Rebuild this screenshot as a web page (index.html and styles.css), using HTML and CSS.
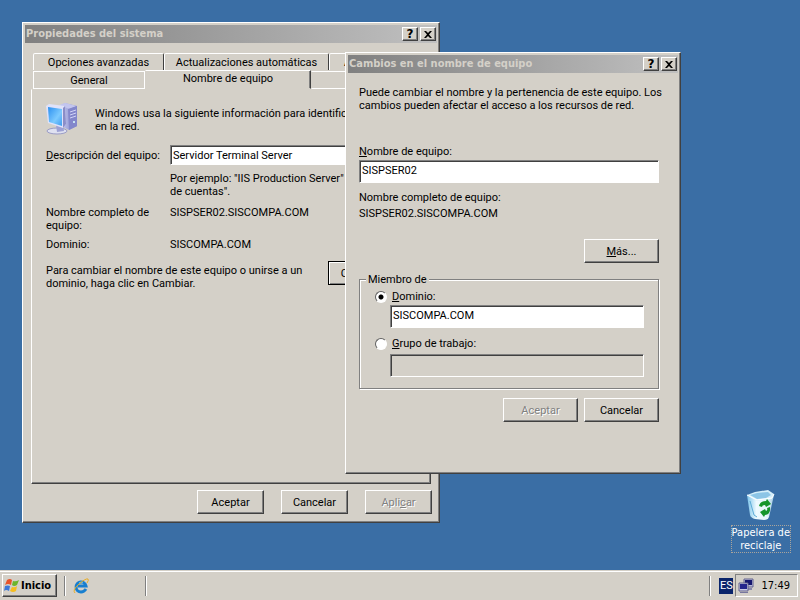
FILE: index.html
```html
<!DOCTYPE html>
<html lang="es">
<head>
<meta charset="utf-8">
<title>Escritorio</title>
<link rel="stylesheet" href="styles.css">
</head>
<body>
<main class="desktop">
  <section class="window system" aria-label="Propiedades del sistema">
    <header class="titlebar">
      <h1>Propiedades del sistema</h1>
      <button class="caption" type="button" aria-label="Ayuda">?</button>
      <button class="caption" type="button" aria-label="Cerrar"><svg viewBox="0 0 8 7" width="8" height="7"><path d="M0 0h2l2 2 2-2h2L5 3.500 8 7H6L4 5 2 7H0l3-3.500z" fill="#000"/></svg></button>
    </header>
    <div class="tabs">
      <div class="tab-row back">
        <button class="tab advanced" type="button">Opciones avanzadas</button>
        <button class="tab updates" type="button">Actualizaciones automáticas</button>
        <button class="tab rest" type="button">Acceso remoto</button>
      </div>
      <div class="tab-row front">
        <button class="tab general" type="button">General</button>
        <button class="tab selected" type="button">Nombre de equipo</button>
        <button class="tab rest" type="button">Hardware</button>
      </div>
    </div>
    <div class="panel">
      <div class="intro">
        <svg viewBox="0 0 32 32" width="32" height="32">
          <defs>
            <linearGradient id="scr" x1="0" y1="0" x2="1" y2="1"><stop offset="0" stop-color="#2b8ff0"/><stop offset=".6" stop-color="#7ccaff"/><stop offset="1" stop-color="#3d9cf0"/></linearGradient>
            <linearGradient id="box" x1="0" y1="0" x2="1" y2="0"><stop offset="0" stop-color="#c9cdf2"/><stop offset="1" stop-color="#7a7fc4"/></linearGradient>
          </defs>
          <path d="M14 2l5-2 12 3v20l-8 4-6-3z" fill="url(#box)"/>
          <path d="M14 2l5-2 12 3-8 3z" fill="#c3c5ee"/>
          <path d="M22 6l9-3v20l-8 4z" fill="#8387cb"/>
          <path d="M24 9l6-2M24 12l6-2M24 15l6-2" stroke="#d2d4f8"/>
          <circle cx="28" cy="19" r="1" fill="#dff"/>
          <ellipse cx="11" cy="28" rx="10" ry="3" fill="#dfe1f1" stroke="#9a9cc6"/>
          <path d="M10 22l7 1 1 5-7 1z" fill="#9da1d4"/>
          <path d="M0 3l3-2 16 2 1 18-3 4L2 20z" fill="#dfe2fa"/>
          <path d="M19 3l1 18-3 4V5z" fill="#8a8dc8"/>
          <path d="M2 4l14 2v17L3 19z" fill="url(#scr)"/>
        </svg>
        <p>Windows usa la siguiente información para identificar<br>en la red.</p>
      </div>
      <div class="fields">
        <label class="desc-label" for="desc"><u>D</u>escripción del equipo:</label>
        <input class="text" id="desc" type="text" value="Servidor Terminal Server">
        <p class="example">Por ejemplo: "IIS Production Server"<br>de cuentas".</p>
        <p class="name">Nombre completo de<br>equipo:</p>
        <p>SISPSER02.SISCOMPA.COM</p>
        <p>Dominio:</p>
        <p>SISCOMPA.COM</p>
      </div>
      <div class="change">
        <p>Para cambiar el nombre de este equipo o unirse a un<br>dominio, haga clic en Cambiar.</p>
        <button class="btn default" type="button">Cambiar...</button>
      </div>
    </div>
    <footer class="actions">
      <button class="btn" type="button">Aceptar</button>
      <button class="btn" type="button">Cancelar</button>
      <button class="btn" type="button" disabled>Apli<u>c</u>ar</button>
    </footer>
  </section>

  <section class="window rename" aria-label="Cambios en el nombre de equipo">
    <header class="titlebar">
      <h1>Cambios en el nombre de equipo</h1>
      <button class="caption" type="button" aria-label="Ayuda">?</button>
      <button class="caption" type="button" aria-label="Cerrar"><svg viewBox="0 0 8 7" width="8" height="7"><path d="M0 0h2l2 2 2-2h2L5 3.500 8 7H6L4 5 2 7H0l3-3.500z" fill="#000"/></svg></button>
    </header>
    <form class="dialog">
      <p class="lead">Puede cambiar el nombre y la pertenencia de este equipo. Los<br>cambios pueden afectar el acceso a los recursos de red.</p>
      <label for="pc"><u>N</u>ombre de equipo:</label>
      <input class="text" id="pc" type="text" value="SISPSER02">
      <p class="full">Nombre completo de equipo:<br>SISPSER02.SISCOMPA.COM</p>
      <div class="more"><button class="btn" type="button"><u>M</u>ás...</button></div>
      <fieldset>
        <legend>Miembro de</legend>
        <div class="option"><input type="radio" name="member" id="dom" checked><label for="dom"><u>D</u>ominio:</label></div>
        <input class="text" type="text" value="SISCOMPA.COM" aria-label="Dominio">
        <div class="option second"><input type="radio" name="member" id="grp"><label for="grp"><u>G</u>rupo de trabajo:</label></div>
        <input class="text" type="text" disabled aria-label="Grupo de trabajo">
      </fieldset>
      <div class="confirm">
        <button class="btn" type="button" disabled>Aceptar</button>
        <button class="btn" type="button">Cancelar</button>
      </div>
    </form>
  </section>

  <a class="recycle" href="#">
    <svg viewBox="0 0 30 32" width="30" height="32">
      <defs><linearGradient id="bin" x1="0" y1="0" x2="1" y2="0"><stop offset="0" stop-color="#7cc4ea"/><stop offset=".35" stop-color="#eefaff"/><stop offset=".75" stop-color="#e6f5fc"/><stop offset="1" stop-color="#9fc9e2"/></linearGradient></defs>
      <path d="M1 6l3 20q1 3 5 4l9 1q4 0 5-3l5-22z" fill="url(#bin)"/>
      <path d="M1 6l8-3 13-2 6 4-2 5-15 2z" fill="#d5effa"/>
      <path d="M4 6l7-2 11-1 3 3-5 3-9 1z" fill="#8cc5e6"/>
      <path d="M1 6l10 5 15-2 2-4" fill="none" stroke="#fff"/>
      <path d="M4 12l4 14 3 2" stroke="#5cabd6" fill="none"/>
      <path d="M13 17q1-5 7-5l1-2 4 5-5 3-1-2q-3 0-3 2z" fill="#15952b"/>
      <path d="M24 18q1 7-5 8l-1 2-4-5 5-3 1 2q2-1 1-3z" fill="#15952b"/>
    </svg>
    <span>Papelera de<br>reciclaje</span>
  </a>
</main>

<footer class="taskbar">
  <button class="start" type="button">
    <svg viewBox="0 0 16 16" width="16" height="16">
      <path d="M3 2q3-2 5 0L7 7Q4 5 1 7z" fill="#e8542a"/>
      <path d="M9 3q3 1 6-1l-2 5q-3 2-5 0z" fill="#6cb52d"/>
      <path d="M1 8q3-1 5 0l-1 5q-3-2-5 0z" fill="#3d78d8"/>
      <path d="M8 9q3 1 5-1l-1 5q-3 2-6 0z" fill="#f5bd20"/>
    </svg>
    Inicio
  </button>
  <span class="rule first"></span>
  <a class="browser" href="#" aria-label="Internet Explorer">
    <svg viewBox="0 0 16 16" width="16" height="16">
      <path d="M13 11q-2 3-5 3a5 5 0 1 1 5-6H5" fill="none" stroke="#187fd0" stroke-width="3"/>
      <path d="M10 5Q8 3 6 5" fill="none" stroke="#69c5f5"/>
      <path d="M2 15Q-1 12 6 6t9-5q1 1-1 4" fill="none" stroke="#e9ac22"/>
    </svg>
  </a>
  <span class="rule"></span>
  <span class="rule last"></span>
  <span class="lang">ES</span>
  <div class="tray">
    <svg viewBox="0 0 16 16" width="16" height="16">
      <path d="M6 1h9v8H6z" fill="#b9b9d8" stroke="#65658f"/><path d="M7 2h7v5H7z" fill="#17176f"/>
      <path d="M9 10h5v2H9z" fill="#8888ac"/>
      <path d="M1 5h9v8H1z" fill="#c9c9e4" stroke="#65658f"/><path d="M2 6h7v5H2z" fill="#25258c"/>
      <path d="M2 14h8v1H2z" fill="#77779e"/>
    </svg>
    <time>17:49</time>
  </div>
</footer>
</body>
</html>
```
FILE: styles.css
```css
* { box-sizing: border-box; }

body {
  margin: 0;
  min-height: 100vh;
  display: flex;
  flex-direction: column;
  overflow: hidden;
  background: #3a6ea5;
  color: #000;
  font: 11px/13px Roboto, "Liberation Sans", Arial, sans-serif;
}

p, h1 { margin: 0; }
button, input { font: inherit; color: inherit; }
svg { display: block; flex: none; }

.desktop { position: relative; flex: 1; }

/* Windows */
.window {
  position: absolute;
  display: flex;
  flex-direction: column;
  padding: 2px;
  background: #d4d0c8;
  border: 1px solid;
  border-color: #fff #404040 #404040 #fff;
  box-shadow: inset -1px -1px #808080;
}
.system { left: 22px; top: 22px; width: 418px; }
.rename { left: 345px; top: 52px; width: 336px; }

.titlebar {
  display: flex;
  align-items: center;
  gap: 2px;
  height: 18px;
  padding: 0 1px;
  background: linear-gradient(90deg, #808080, #c0c0c0);
  color: #d4d0c8;
}
.titlebar h1 {
  flex: 1;
  font: bold 11px/18px "DejaVu Sans Condensed", "DejaVu Sans", sans-serif;
}
.caption {
  display: flex;
  align-items: center;
  justify-content: center;
  width: 16px;
  height: 14px;
  padding: 0;
  border: 1px solid;
  border-color: #fff #404040 #404040 #fff;
  box-shadow: inset -1px -1px #808080;
  background: #d4d0c8;
  color: #000;
  font: bold 12px/12px "DejaVu Sans", sans-serif;
}

/* Tabs */
.tabs { padding: 10px 8px 0; }
.tab-row { display: flex; overflow: hidden; }
.back { height: 17px; }
.front { height: 19px; align-items: flex-end; }
.tab {
  height: 18px;
  padding: 0;
  border: 1px solid;
  border-color: #fff #404040 transparent #fff;
  border-radius: 2px 2px 0 0;
  background: #d4d0c8;
}
.advanced { width: 131px; }
.updates { width: 165px; }
.general { width: 112px; }
.front .tab { border-color: #fff; border-radius: 0; }
.front .selected {
  width: 166px;
  height: 19px;
  padding-bottom: 2px;
  border-color: #fff #404040 transparent transparent;
  box-shadow: inset -1px 0 #808080;
}
.tab.rest { flex: 1; text-align: left; padding-left: 14px; }
.front .rest { padding-left: 50px; border-left-color: transparent; }

.panel {
  height: 395px;
  margin: 0 6px;
  padding: 13px 14px;
  border: 1px solid;
  border-color: transparent #404040 #404040 #fff;
  box-shadow: inset -1px -1px #808080;
}
.intro { display: flex; gap: 17px; }
.intro p { padding-top: 4px; white-space: nowrap; }
.fields {
  display: grid;
  grid-template-columns: 124px 1fr;
  row-gap: 6px;
  margin-top: 10px;
}
.desc-label { align-self: center; }
.example { grid-column: 2; margin: 1px 0 2px; white-space: nowrap; }
.change {
  display: flex;
  gap: 20px;
  margin-top: 10px;
}
.change p { width: 262px; padding-top: 3px; }

.text {
  display: block;
  width: 100%;
  height: 20px;
  padding: 0 2px;
  border: 1px solid;
  border-color: #808080 #fff #fff #808080;
  border-radius: 0;
  box-shadow: inset 1px 1px #404040;
  background: #fff;
}
.text:disabled { background: #d4d0c8; }

.btn {
  width: 75px;
  height: 24px;
  padding: 0;
  border: 1px solid;
  border-color: #fff #404040 #404040 #fff;
  box-shadow: inset -1px -1px #808080;
  background: #d4d0c8;
}
.btn:disabled { color: #808080; text-shadow: 1px 1px #fff; }
.default {
  border-color: #000;
  box-shadow: inset 1px 1px #fff, inset -1px -1px #808080;
}
.actions {
  display: flex;
  justify-content: flex-end;
  gap: 17px;
  padding: 6px 5px;
}
.actions .btn { width: 67px; }

/* Rename dialog */
.dialog { padding: 13px 19px 49px 11px; }
.lead { margin-bottom: 33px; white-space: nowrap; }
.dialog > label { display: block; margin-bottom: 2px; }
.dialog .text { height: 23px; padding-bottom: 3px; }
.full { margin-top: 7px; line-height: 16px; }
.more { display: flex; justify-content: flex-end; margin-top: 17px; }
fieldset {
  margin: 10px 0 0;
  padding: 4px 14px 11px 30px;
  border: 1px solid #808080;
  box-shadow: 1px 1px #fff, inset 1px 1px #fff;
}
legend { margin-left: -24px; padding: 0 2px; background: #d4d0c8; }
.option {
  display: flex;
  align-items: center;
  gap: 5px;
  margin: 0 0 2px -15px;
}
.second { margin-top: 9px; margin-bottom: 4px; }
.option input {
  appearance: none;
  width: 12px;
  height: 12px;
  margin: 0;
  border: 1px solid;
  border-color: #606060 #fff #fff #606060;
  border-radius: 50%;
  background: #fff;
}
.option input:checked { background: radial-gradient(circle, #000 2px, #fff 3px); }
.confirm {
  display: flex;
  justify-content: flex-end;
  gap: 6px;
  margin-top: 9px;
}

/* Desktop icon */
.recycle {
  position: absolute;
  right: 9px;
  bottom: 17px;
  display: flex;
  flex-direction: column;
  align-items: center;
  gap: 4px;
  color: #fff;
  text-align: center;
  text-decoration: none;
  font: 11px/13px "DejaVu Sans Condensed", "DejaVu Sans", sans-serif;
}
.recycle span { border: 1px dotted #a9a49c; white-space: nowrap; }

/* Taskbar */
.taskbar {
  display: flex;
  align-items: center;
  height: 30px;
  padding: 0 2px;
  border-top: 1px solid #d4d0c8;
  box-shadow: inset 0 1px #fff;
  background: #d4d0c8;
}
.start {
  display: flex;
  align-items: center;
  gap: 1px;
  width: 55px;
  height: 23px;
  padding: 0 0 0 1px;
  border: 1px solid;
  border-color: #fff #404040 #404040 #fff;
  box-shadow: inset -1px -1px #808080;
  background: #d4d0c8;
  font: bold 11px/13px "DejaVu Sans Condensed", "DejaVu Sans", sans-serif;
}
.rule {
  width: 2px;
  height: 20px;
  border-left: 1px solid #808080;
  border-right: 1px solid #fff;
}
.first { margin: 0 7px; }
.browser { margin-right: 56px; }
.last { margin-left: auto; }
.lang {
  width: 14px;
  margin: 0 2px 0 8px;
  background: #0a246a;
  color: #fff;
  line-height: 16px;
  text-align: center;
}
.tray {
  display: flex;
  align-items: center;
  gap: 7px;
  height: 23px;
  padding: 0 7px 0 2px;
  border: 1px solid;
  border-color: #808080 #fff #fff #808080;
}
.tray time { font: 11px/13px "DejaVu Sans Condensed", "DejaVu Sans", sans-serif; }
```
